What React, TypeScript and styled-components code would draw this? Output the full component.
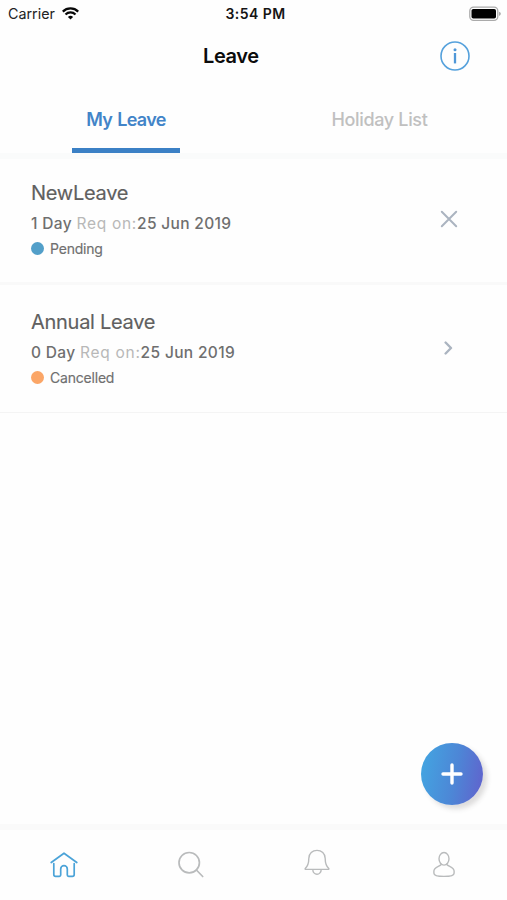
import React from "react";
import styled, { createGlobalStyle } from "styled-components";

const GlobalStyle = createGlobalStyle`
  * { box-sizing: border-box; }
  body { margin: 0; background: #fefefe; font-family: Inter, "Liberation Sans", sans-serif; }
  button { border: 0; padding: 0; background: none; font: inherit; color: inherit; }
`;

const Screen = styled.div`
  width: 507px;
  height: 900px;
  display: flex;
  flex-direction: column;
  background: #fefefe;
  overflow: hidden;
`;

const StatusBar = styled.div`
  height: 28px;
  flex: none;
  display: grid;
  grid-template-columns: 1fr auto 1fr;
  align-items: center;
  padding: 0 6px 1px 8px;
  color: #222;
`;

const Carrier = styled.div`
  display: flex;
  align-items: center;
  gap: 7px;
  font-size: 14.3px;
  line-height: 20px;
`;

const Clock = styled.div`
  padding-left: 2px;
  font-size: 14px;
  font-weight: 600;
  letter-spacing: 0.45px;
  color: #151515;
`;

const Battery = styled.svg`
  justify-self: end;
`;

const Header = styled.header`
  height: 56px;
  flex: none;
  display: grid;
  grid-template-columns: 203px 1fr auto;
  align-items: center;
  padding-right: 37px;
`;

const Title = styled.h1`
  grid-column: 2;
  margin: 0;
  font-size: 20px;
  font-weight: 600;
  letter-spacing: -0.4px;
  color: #0c0c0c;
`;

const InfoButton = styled.button`
  display: flex;
`;

const Tabs = styled.nav`
  height: 69px;
  flex: none;
  display: grid;
  grid-template-columns: 252px 1fr;
`;

const Tab = styled.button<{ $active?: boolean }>`
  width: 108px;
  justify-self: center;
  padding-top: 7px;
  border-bottom: 5px solid ${(p) => (p.$active ? "#3b80c5" : "transparent")};
  font-size: 18px;
  font-weight: ${(p) => (p.$active ? 600 : 500)};
  letter-spacing: ${(p) => (p.$active ? "-0.65px" : "-0.35px")};
  word-spacing: ${(p) => (p.$active ? "1px" : "0")};
  white-space: nowrap;
  color: ${(p) => (p.$active ? "#4284c8" : "#c0c0c0")};
`;

const Leaves = styled.main`
  flex: 1;
  border-top: 6px solid #fafbfb;
`;

const LeaveRow = styled.article`
  height: 128px;
  display: flex;
  align-items: flex-start;
  justify-content: space-between;
  padding: 22px 46px 0 31px;
  border-bottom: 1px solid #f4f4f4;
  &:first-child {
    height: 126px;
    padding-top: 19px;
    border-bottom: 3px solid #f9f9f9;
  }
`;

const LeaveName = styled.h2`
  margin: 0;
  font-size: 20px;
  font-weight: 400;
  line-height: 31px;
  letter-spacing: -0.28px;
  color: #606060;
  -webkit-text-stroke: 0.15px #606060;
`;

const LeaveMeta = styled.p`
  margin: 0;
  font-size: 15.5px;
  font-weight: 500;
  line-height: 30px;
  letter-spacing: 0.34px;
  color: #6f6f6f;
`;

const Muted = styled.span`
  font-weight: 400;
  letter-spacing: 0.72px;
  color: #b8b8b8;
`;

const Status = styled.div<{ $color: string }>`
  display: flex;
  align-items: center;
  gap: 6px;
  font-size: 14px;
  line-height: 19px;
  letter-spacing: -0.2px;
  color: #6f6f6f;
  -webkit-text-stroke: 0.15px #6f6f6f;
  &::before {
    content: "";
    width: 13px;
    height: 13px;
    border-radius: 50%;
    background: ${(p) => p.$color};
  }
`;

const RowAction = styled.button`
  display: flex;
  align-items: center;
  justify-content: center;
  width: 24px;
  height: 82px;
`;

const AddButton = styled.button`
  position: absolute;
  left: 421px;
  top: 743px;
  width: 62px;
  height: 62px;
  display: flex;
  align-items: center;
  justify-content: center;
  border-radius: 50%;
  background: linear-gradient(100deg, #42a7e2 0%, #4d86d6 55%, #6260cc 100%);
  box-shadow: 4px 4px 5px rgba(70, 65, 65, 0.18);
`;

const BottomNav = styled.nav`
  height: 76px;
  flex: none;
  display: grid;
  grid-template-columns: repeat(4, 1fr);
  padding-left: 1px;
  border-top: 6px solid #fafafa;
`;

const NavItem = styled.button<{ $active?: boolean }>`
  display: flex;
  align-items: center;
  justify-content: center;
  color: ${(p) => (p.$active ? "#4ba3d8" : "#b9bbbc")};
`;

const stroke = { fill: "none", stroke: "currentColor", strokeLinecap: "round", strokeLinejoin: "round" } as const;

const leaves = [
  { name: "NewLeave", days: 1, date: "25 Jun 2019", status: "Pending", color: "#529fc9", closable: true },
  { name: "Annual Leave", days: 0, date: "25 Jun 2019", status: "Cancelled", color: "#fba667", closable: false },
];

export default function App() {
  return (
    <Screen>
      <GlobalStyle />
      <StatusBar>
        <Carrier>
          <span>Carrier</span>
          <svg width="17" height="13" viewBox="0 0 17 13" fill="none" stroke="#080808" strokeWidth="2.2">
            <path d="M.8 4.6a11 11 0 0 1 15.4 0M3.5 7.5a7.1 7.1 0 0 1 10 0" />
            <path d="M8.5 12.6 5.9 10a3.7 3.7 0 0 1 5.2 0Z" fill="#080808" stroke="none" />
          </svg>
        </Carrier>
        <Clock>3:54 PM</Clock>
        <Battery width="32" height="16" viewBox="0 0 32 16">
          <rect x=".8" y="1.2" width="28" height="13.2" rx="3.8" fill="#fff" stroke="#aaa" strokeWidth="1.3" />
          <rect x="2.5" y="3" width="24.5" height="9.6" rx="1.8" fill="#000" />
          <path d="M30.2 5.7q1.5.6 1.5 2.1t-1.5 2.1Z" fill="#999" />
        </Battery>
      </StatusBar>
      <Header>
        <Title>Leave</Title>
        <InfoButton aria-label="Information">
          <svg width="30" height="30" viewBox="0 0 30 30">
            <circle cx="15" cy="15" r="14" fill="none" stroke="#55a1dc" strokeWidth="1.6" />
            <circle cx="15" cy="8.8" r="1.5" fill="#4f97d8" />
            <path d="M15 12v10.4" stroke="#4f97d8" strokeWidth="2.3" />
          </svg>
        </InfoButton>
      </Header>
      <Tabs>
        <Tab $active>My Leave</Tab>
        <Tab>Holiday List</Tab>
      </Tabs>
      <Leaves>
        {leaves.map((leave) => (
          <LeaveRow key={leave.name}>
            <div>
              <LeaveName>{leave.name}</LeaveName>
              <LeaveMeta>{leave.days} Day <Muted>Req on:</Muted>{leave.date}</LeaveMeta>
              <Status $color={leave.color}>{leave.status}</Status>
            </div>
            <RowAction aria-label={leave.closable ? "Cancel request" : "Open request"}>
              {leave.closable ? (
                <svg width="18" height="18" viewBox="0 0 18 18" {...stroke} stroke="#abb4c0" strokeWidth="2">
                  <path d="m1.8 1.8 14.4 14.4M16.2 1.8 1.8 16.2" />
                </svg>
              ) : (
                <svg width="10" height="14" viewBox="0 0 10 14" {...stroke} stroke="#abb4c0" strokeWidth="2.4">
                  <path d="M1.6 1.5 7 7l-5.4 5.5" />
                </svg>
              )}
            </RowAction>
          </LeaveRow>
        ))}
      </Leaves>
      <AddButton aria-label="Add leave">
        <svg width="22" height="22" viewBox="0 0 22 22" {...stroke} stroke="#fff" strokeWidth="3.4">
          <path d="M11 2v18M2 11h18" />
        </svg>
      </AddButton>
      <BottomNav>
        <NavItem $active aria-label="Home">
          <svg width="28" height="28" viewBox="0 0 28 28" {...stroke} strokeWidth="1.7">
            <path d="M1.2 11.5 14 2.2l12.8 9.3M3.8 12.5v11q0 1.8 1.8 1.8h3.8q1.3 0 1.3-1.3v-6a3.3 3.3 0 0 1 6.6 0v6q0 1.3 1.3 1.3h3.8q1.8 0 1.8-1.8v-11" />
          </svg>
        </NavItem>
        <NavItem aria-label="Search">
          <svg width="28" height="28" viewBox="0 0 28 28" {...stroke} strokeWidth="1.7">
            <circle cx="12.2" cy="11.7" r="10.2" />
            <path d="m19.4 19 6.3 6.5" />
          </svg>
        </NavItem>
        <NavItem aria-label="Notifications">
          <svg width="28" height="32" viewBox="0 0 28 32" {...stroke} strokeWidth="1.4">
            <path d="M2.2 19.6C5 17 5.8 14.5 5.8 9.5C5.8 4.5 9.5 1.4 14 1.4s8.2 3.1 8.2 8.1c0 5 .8 7.5 3.6 10.1q.3.8-.5.8H2.7q-.8 0-.5-.8ZM9.8 20.5a4.2 4.8 0 0 0 8.4 0" />
          </svg>
        </NavItem>
        <NavItem aria-label="Profile">
          <svg width="28" height="28" viewBox="0 0 28 28" {...stroke} strokeWidth="1.4">
            <ellipse cx="14" cy="7.8" rx="5" ry="6.3" />
            <path d="M11.2 13.5C9.4 15.5 3.9 16.5 3.9 20v2.2c0 2 4.5 3.2 10.1 3.2s10.1-1.2 10.1-3.2V20c0-3.5-5.5-4.5-7.3-6.5" />
          </svg>
        </NavItem>
      </BottomNav>
    </Screen>
  );
}
